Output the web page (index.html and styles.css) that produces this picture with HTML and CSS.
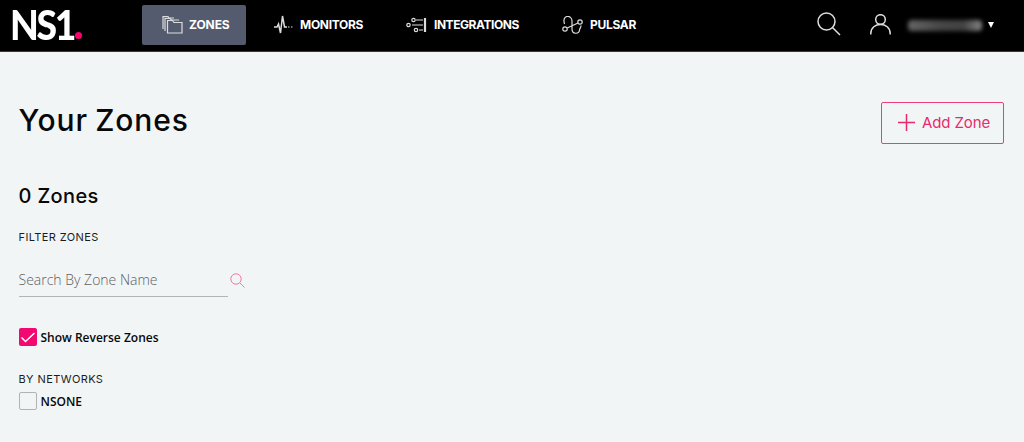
FILE: index.html
```
<!DOCTYPE html>
<html lang="en">
<head>
<meta charset="utf-8">
<title>Your Zones</title>
<link rel="stylesheet" href="styles.css">
</head>
<body>
<header class="topbar">
  <div class="logo"><span class="logo-name">NS1</span><i class="logo-dot"></i></div>
  <nav class="nav">
    <a class="nav-item active zones">
      <svg width="21" height="18" viewBox="0 0 21 18"><path d="M5.500 4.500h5l1.500 2h8v10.500h-14.500zM3 15V2.500h5l1.500 1.500H17M1 13V.7h5L7 2h5"/></svg>
      <span>ZONES</span>
    </a>
    <a class="nav-item monitors">
      <svg width="21" height="20" viewBox="0 0 21 20"><path d="M1 12h3l1.500-3 2 9L9.500 1l2 11H14" stroke-width="1.500"/><path d="M15 12h5" stroke-dasharray="1.500 1.500"/></svg>
      <span>MONITORS</span>
    </a>
    <a class="nav-item integrations">
      <svg width="21" height="16" viewBox="0 0 21 16"><circle cx="7.500" cy="3" r="1.700"/><circle cx="2.500" cy="8" r="1.700"/><circle cx="10" cy="13" r="1.700"/><path d="M10 3h7M6 8h11M13 13h4"/><path d="M19 1v14" stroke-width="2.200"/></svg>
      <span>INTEGRATIONS</span>
    </a>
    <a class="nav-item pulsar">
      <svg width="21" height="18" viewBox="0 0 21 18"><path d="M2.500 8C-.5 -1.500 10 -1.500 10 5V13C10 18.500 17 18.500 17.500 14 17.800 12 19 12 19 9.500M5.200 12 16 7"/><circle cx="3" cy="13" r="2.200"/><circle cx="18" cy="6" r="2.200"/></svg>
      <span>PULSAR</span>
    </a>
  </nav>
  <div class="tools">
    <svg class="find" width="24" height="24" viewBox="0 0 24 24"><circle cx="9.500" cy="9.500" r="8.500"/><path d="M15.500 15.500 23 23"/></svg>
    <svg class="user" width="21" height="21" viewBox="0 0 21 21"><circle cx="10.500" cy="5.500" r="4.800"/><path d="M.8 20.500V19.500C.8 7.500 20.200 7.500 20.200 19.500v1"/></svg>
    <span class="account"></span>
    <i class="caret"></i>
  </div>
</header>
<main class="page">
  <div class="heading">
    <h1>Your Zones</h1>
    <button class="add"><svg width="17" height="17" viewBox="0 0 17 17"><path d="M8.500 0v17M0 8.500h17"/></svg><span>Add Zone</span></button>
  </div>
  <h2>0 Zones</h2>
  <h3 class="filter">FILTER ZONES</h3>
  <div class="search">
    <div class="field">Search By Zone Name</div>
    <svg width="15" height="15" viewBox="0 0 15 15"><circle cx="6" cy="6" r="5.200"/><path d="m9.800 9.800 4.700 4.700"/></svg>
  </div>
  <label class="option reverse"><span class="box checked"><svg width="18" height="18" viewBox="0 0 18 18"><path d="m2.500 9.500 4 4 9-8.500"/></svg></span><span>Show Reverse Zones</span></label>
  <h3 class="networks">BY NETWORKS</h3>
  <label class="option"><span class="box"></span><span class="nsone">NSONE</span></label>
</main>
</body>
</html>
```
FILE: styles.css
```
* { box-sizing: border-box; }
body { margin: 0; height: 442px; background: #f1f5f6; color: #080808; font-family: "Open Sans", sans-serif; overflow: hidden; }
svg { display: block; flex: none; fill: none; stroke: currentColor; }
.topbar { display: flex; height: 52px; background: #000; border-bottom: 1px solid #35364b; color: #fff; }
.logo { display: flex; width: 142px; padding-left: 9.5px; font: 900 41px/49px Lato, sans-serif; letter-spacing: -2.5px; }
.logo-name { width: 64px; transform: scaleX(.91); transform-origin: 0 0; }
.logo-dot { width: 7px; height: 7px; margin: 32px 0 0 1.5px; border-radius: 50%; background: #f4066d; }
.nav { display: flex; padding-top: 5px; }
.nav-item { display: flex; align-items: center; height: 40px; border-radius: 2px; font: 700 12px/20px Inter, sans-serif; letter-spacing: -.3px; }
.nav-item svg { color: #dcdddf; stroke-width: 1.2; }
.nav-item span { margin-left: 7px; white-space: nowrap; }
.zones { width: 104px; padding-left: 20px; background: #555b6e; letter-spacing: -.1px; }
.zones span, .monitors span { margin-left: 6px; }
.monitors { width: 133px; padding-left: 27px; }
.integrations { width: 156px; padding-left: 27px; letter-spacing: -.45px; }
.pulsar { padding-left: 27px; }
.tools { display: flex; flex: 1; justify-content: flex-end; padding-right: 29px; }
.tools svg { color: #dedede; stroke-width: 1.5; }
.find { margin-top: 12px; }
.user { margin: 14px 0 0 29px; }
.account { width: 74px; height: 11px; margin: 20px 0 0 17px; border-radius: 4px; background: linear-gradient(90deg, #656565, #464646 45%, #424242 75%, #858585); filter: blur(2px); }
.caret { margin: 22px 1px 0 6px; border: solid transparent; border-width: 6px 3px 0; border-top-color: #fff; height: 0; }
.page { padding: 50px 20px 0 18.5px; }
.heading { display: flex; justify-content: space-between; height: 78px; }
h1, h2, h3 { margin: 0; font-family: Inter, sans-serif; white-space: nowrap; }
h1 { font-size: 30px; line-height: 37px; font-weight: 500; letter-spacing: .85px; word-spacing: -1.5px; }
.add { display: flex; align-items: center; width: 123px; height: 42px; padding: 0 0 0 16px; border: 1px solid #ed3d7b; border-radius: 2px; background: none; color: #e82a6b; font: 400 15px/20px Inter, sans-serif; letter-spacing: -.1px; }
.add span { margin: -1px 0 0 7px; white-space: nowrap; }
.add svg { margin-top: -1px; stroke-width: 1.5; }
h2 { font-size: 20px; line-height: 32px; font-weight: 500; letter-spacing: .35px; }
h3 { font-size: 11px; line-height: 16px; font-weight: 400; letter-spacing: .4px; color: #1c1c1c; }
.filter { margin-top: 17px; }
.search { display: flex; margin-top: 19px; }
.search svg { margin: 9px 0 0 2.5px; color: #f278a7; }
.field { width: 209px; height: 33px; border-bottom: 1px solid #b1b6b8; color: #606060; font-size: 14px; font-weight: 300; line-height: 31px; }
.option { display: flex; align-items: center; height: 18px; font-size: 12px; font-weight: 600; color: #080808; }
.reverse { margin-top: 31px; }
.box { width: 18px; height: 18px; margin-right: 4px; border: 1px solid #afb3b5; border-radius: 2px; }
.box.checked { border: 0; background: #f10870; color: #fff; }
.box svg { stroke-width: 1.5; }
.networks { margin: 25px 0 5px; }
```
